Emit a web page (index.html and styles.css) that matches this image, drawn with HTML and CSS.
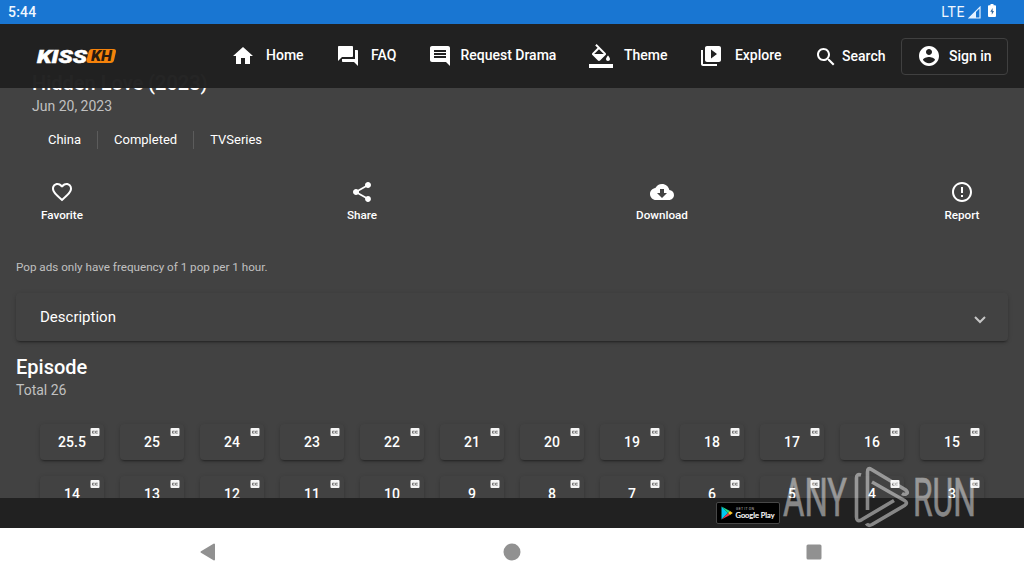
FILE: index.html
```html
<!DOCTYPE html>
<html lang="en">
<head>
    <meta charset="UTF-8">
    <meta name="viewport" content="width=device-width, initial-scale=1">
    <title>Hidden Love (2023) - KissKH</title>
    <link rel="stylesheet" href="styles.css">
</head>
<body>
    <div class="status-bar">
        <span class="clock">5:44</span>
        <span class="lte">LTE</span>
        <svg class="signal" width="13" height="13" viewBox="0 0 13 13"><path d="M12 1.2V12H1.2z" fill="none" stroke="#e3f0ff" stroke-width="1.2"/><path d="M8 5v7H1z" fill="#e3f0ff"/></svg>
        <svg class="battery" width="8" height="14" viewBox="0 0 8 14"><path d="M2.5 0h3v1.3H7q1 0 1 1V12q0 1-1 1H1q-1 0-1-1V2.300q0-1 1-1h1.500z" fill="#fff"/><path d="M4.600 4L2.300 7.700h1.500v3L6 7H4.600z" fill="#34689c"/></svg>
    </div>

    <header class="header">
        <svg class="logo" width="82" height="24" viewBox="0 0 82 24">
            <path d="M56 5h21.500q3 0 2.400 3l-1.800 8q-.6 3-3.600 3H53q-3 0-2.400-3l2-8q.800-3 3.400-3z" fill="#f5820b"/>
            <text class="logo-text" x="1" y="18.500" textLength="50" lengthAdjust="spacingAndGlyphs">KISS</text>
            <text class="logo-text logo-kh" x="55" y="17" textLength="21" lengthAdjust="spacingAndGlyphs">KH</text>
        </svg>
        <nav class="nav">
            <a class="nav-item home"><svg class="icon" viewBox="0 0 24 24"><path d="M10 20v-6h4v6h5v-8h3L12 3 2 12h3v8z"/></svg>Home</a>
            <a class="nav-item faq"><svg class="icon" viewBox="0 0 24 24"><path d="M21 6h-2v9H6v2c0 .55.45 1 1 1h11l4 4V7c0-.55-.45-1-1-1zm-4 6V3c0-.55-.45-1-1-1H3c-.55 0-1 .45-1 1v14l4-4h10c.55 0 1-.45 1-1z"/></svg>FAQ</a>
            <a class="nav-item request"><svg class="icon" viewBox="0 0 24 24"><path d="M21.990 4c0-1.100-.89-2-1.990-2H4c-1.100 0-2 .9-2 2v12c0 1.100.9 2 2 2h14l4 4-.01-18zM18 14H6v-2h12v2zm0-3H6V9h12v2zm0-3H6V6h12v2z"/></svg>Request Drama</a>
            <a class="nav-item theme"><svg class="icon" viewBox="0 0 24 24"><path d="M16.560 8.940L7.620 0 6.210 1.410l2.380 2.380-5.150 5.150c-.59.59-.59 1.540 0 2.120l5.500 5.500c.29.29.68.44 1.060.44s.77-.15 1.060-.44l5.500-5.500c.59-.58.59-1.530 0-2.120zM5.210 10L10 5.210 14.790 10H5.210zM19 11.500s-2 2.170-2 3.500c0 1.100.9 2 2 2s2-.9 2-2c0-1.330-2-3.500-2-3.500zM0 20h24v4H0z"/></svg>Theme</a>
            <a class="nav-item explore"><svg class="icon" viewBox="0 0 24 24"><path d="M4 6H2v14c0 1.100.9 2 2 2h14v-2H4V6zm16-4H8c-1.100 0-2 .9-2 2v12c0 1.100.9 2 2 2h12c1.100 0 2-.9 2-2V4c0-1.100-.9-2-2-2zm-8 12.500v-9l6 4.500-6 4.500z"/></svg>Explore</a>
            <a class="nav-item search"><svg class="icon" viewBox="0 0 24 24"><path d="M15.500 14h-.79l-.28-.27C15.410 12.590 16 11.110 16 9.500 16 5.910 13.090 3 9.500 3S3 5.910 3 9.500 5.910 16 9.500 16c1.610 0 3.090-.59 4.230-1.570l.27.28v.79l5 4.990L20.490 19l-4.990-5zm-6 0C7.010 14 5 11.990 5 9.500S7.010 5 9.500 5 14 7.010 14 9.500 11.990 14 9.500 14z"/></svg>Search</a>
        </nav>
        <button class="sign-in"><svg class="icon" viewBox="0 0 24 24"><path d="M12 2C6.480 2 2 6.480 2 12s4.480 10 10 10 10-4.480 10-10S17.520 2 12 2zm0 3c1.660 0 3 1.340 3 3s-1.340 3-3 3-3-1.340-3-3 1.340-3 3-3zm0 14.200c-2.500 0-4.710-1.280-6-3.220.03-1.990 4-3.080 6-3.080 1.990 0 5.970 1.090 6 3.080-1.290 1.940-3.500 3.220-6 3.220z"/></svg>Sign in</button>
    </header>

    <main class="content">
        <section class="drama">
            <h1>Hidden Love (2023)</h1>
            <p class="date">Jun 20, 2023</p>
            <ul class="meta">
                <li>China</li>
                <li>Completed</li>
                <li>TVSeries</li>
            </ul>
        </section>

        <div class="actions">
            <a class="action"><svg class="icon" viewBox="0 0 24 24"><path d="M16.500 3c-1.740 0-3.410.81-4.500 2.090C10.910 3.810 9.240 3 7.500 3 4.420 3 2 5.420 2 8.500c0 3.780 3.400 6.860 8.550 11.540L12 21.350l1.450-1.320C18.600 15.360 22 12.280 22 8.500 22 5.420 19.580 3 16.500 3zm-4.400 15.550l-.1.100-.1-.1C7.140 14.240 4 11.390 4 8.500 4 6.500 5.500 5 7.500 5c1.540 0 3.040.99 3.570 2.360h1.870C13.460 5.990 14.960 5 16.500 5c2 0 3.500 1.500 3.500 3.500 0 2.890-3.140 5.740-7.900 10.050z"/></svg>Favorite</a>
            <a class="action"><svg class="icon" viewBox="0 0 24 24"><path d="M18 16.080c-.76 0-1.440.3-1.960.77L8.910 12.700c.05-.23.09-.46.09-.7s-.04-.47-.09-.7l7.050-4.110c.54.5 1.250.81 2.040.81 1.660 0 3-1.340 3-3s-1.340-3-3-3-3 1.340-3 3c0 .24.04.47.09.7L8.040 9.810C7.500 9.310 6.790 9 6 9c-1.660 0-3 1.340-3 3s1.340 3 3 3c.79 0 1.500-.31 2.040-.81l7.120 4.160c-.05.21-.08.43-.08.65 0 1.610 1.310 2.920 2.920 2.920s2.920-1.310 2.920-2.920-1.310-2.920-2.920-2.920z"/></svg>Share</a>
            <a class="action"><svg class="icon" viewBox="0 0 24 24"><path d="M19.350 10.040C18.670 6.590 15.640 4 12 4 9.110 4 6.600 5.640 5.350 8.040 2.340 8.360 0 10.910 0 14c0 3.310 2.690 6 6 6h13c2.760 0 5-2.240 5-5 0-2.640-2.050-4.780-4.650-4.960zM17 13l-5 5-5-5h3V9h4v4h3z"/></svg>Download</a>
            <a class="action"><svg class="icon" viewBox="0 0 24 24"><path d="M11 15h2v2h-2zm0-8h2v6h-2zm.99-5C6.470 2 2 6.480 2 12s4.470 10 9.990 10C17.520 22 22 17.520 22 12S17.520 2 11.990 2zM12 20c-4.420 0-8-3.580-8-8s3.580-8 8-8 8 3.580 8 8-3.580 8-8 8z"/></svg>Report</a>
        </div>

        <p class="notice">Pop ads only have frequency of 1 pop per 1 hour.</p>

        <div class="panel">
            <span>Description</span>
            <svg class="arrow" viewBox="0 0 12 8"><path d="M1 1l5 5 5-5"/></svg>
        </div>

        <h2>Episode</h2>
        <p class="total">Total 26</p>

        <div class="episodes"></div>
    </main>

    <footer class="footer">
        <svg class="play-badge" width="64" height="22" viewBox="0 0 64 22">
            <rect x=".5" y=".5" width="63" height="21" rx="1.500" fill="#000" stroke="#555" stroke-width=".8"/>
            <path d="M5.500 4.500v13l6.500-6.500z" fill="#00c8f0"/>
            <path d="M5.500 4.500L12 11l2-2z" fill="#20dc88"/>
            <path d="M5.500 17.500L12 11l2 2z" fill="#f03a4a"/>
            <path d="M14 9l2.800 2L14 13l-2-2z" fill="#ffc825"/>
            <text class="badge-small" x="20" y="8" textLength="18">GET IT ON</text>
            <text class="badge-name" x="19.500" y="15.500" textLength="39" lengthAdjust="spacingAndGlyphs">Google Play</text>
        </svg>
    </footer>

    <div class="system-nav">
        <svg width="16" height="18" viewBox="0 0 16 18"><path d="M14 1.500v15L1.500 9z" stroke="#919191" stroke-width="2" stroke-linejoin="round"/></svg>
        <svg width="18" height="18" viewBox="0 0 18 18"><circle cx="9" cy="9" r="8.500"/></svg>
        <svg width="16" height="16" viewBox="0 0 16 16"><rect x=".5" y=".5" width="15" height="15" rx="1.500"/></svg>
    </div>

    <svg class="watermark" width="200" height="66" viewBox="0 0 200 66">
        <text x="1" y="51" textLength="64" lengthAdjust="spacingAndGlyphs">ANY</text>
        <path d="M79 10q-4.500-1.500-4.500 3V52q0 5.500 5 2.800L112 35.500"/>
        <path d="M85.500 45V7q0-5 4-2.500L123 24.500q4 3 1 4.500-2 .8-4-.5"/>
        <path d="M90 17l32.500 18.500q4 2.500 0 5L90 59.500q-4 2-5.500-1"/>
        <text x="131" y="51" textLength="63" lengthAdjust="spacingAndGlyphs">RUN</text>
    </svg>

    <script>
        const episodes = ["25.5"];
        for (let i = 25; i >= 3; i--) episodes.push(i);

        const list = document.querySelector('.episodes');

        episodes.forEach(episode => {
            const button = document.createElement('button');
            button.className = 'episode';
            button.innerHTML = `${episode}<svg class="cc" viewBox="0 0 10 8"><rect x=".5" width="9" height="8" rx="1" fill="#f5f5f5"/><path d="M4.600 3.200H2.500v1.900h2.100M7.700 3.200H5.600v1.900h2.100" fill="none" stroke="#555" stroke-width=".8"/></svg>`;
            list.appendChild(button);
        });
    </script>
</body>
</html>
```

FILE: styles.css
```css
* {
    margin: 0;
    padding: 0;
    box-sizing: border-box;
}

body {
    display: flex;
    flex-direction: column;
    height: 576px;
    overflow: hidden;
    background-color: #424242;
    color: white;
    font-family: Roboto, sans-serif;
    font-size: 14px;
}

.icon {
    width: 24px;
    height: 24px;
    fill: white;
    flex-shrink: 0;
}

.status-bar {
    display: flex;
    align-items: center;
    flex: 0 0 24px;
    padding: 0 28px 0 8px;
    background-color: #1976d2;
    color: #f0f7ff;
}

.clock {
    flex: 1;
    font-weight: 500;
    letter-spacing: 0.2px;
}

.lte {
    letter-spacing: 0.6px;
}

.signal {
    margin: 0 7px 0 3px;
}

.battery {
    margin-top: -3px;
}

.header {
    position: relative;
    z-index: 1;
    display: flex;
    align-items: center;
    flex: 0 0 64px;
    padding: 0 16px 0 36px;
    background-color: rgba(33, 33, 33, 0.98);
}

.logo-text {
    font: italic 900 18.5px Roboto, sans-serif;
    fill: white;
    stroke: white;
    stroke-width: 0.5px;
}

.logo-kh {
    font-size: 14px;
    fill: #2a1b10;
    stroke: none;
}

.nav {
    display: flex;
    flex: 1;
    margin-left: 112.5px;
    font-weight: 500;
}

.nav-item {
    display: flex;
    align-items: center;
    gap: 11.5px;
    line-height: 22px;
    padding-bottom: 2px;
    white-space: nowrap;
}

.nav-item .icon {
    position: relative;
    top: 1px;
}

.faq {
    margin-left: 32px;
}

.request {
    margin-left: 32px;
    gap: 8px;
}

.theme {
    margin-left: 32.5px;
    gap: 11px;
}

.explore {
    margin-left: 32px;
}

.search {
    margin-left: 32.5px;
    gap: 4px;
    padding-bottom: 0;
}

.search .icon {
    top: 1px;
}

.sign-in {
    display: flex;
    align-items: center;
    gap: 8px;
    width: 107px;
    height: 37px;
    padding: 0 15px;
    border: 1px solid #404040;
    border-radius: 4px;
    background: transparent;
    color: white;
    font: 500 14px Roboto, sans-serif;
}

.content {
    flex: 1;
    min-height: 0;
    margin-top: -19px;
    padding: 0 16px;
}

.drama {
    padding: 0 16px;
}

h1, h2 {
    font-size: 20px;
    font-weight: 500;
    line-height: 28px;
}

.date, .total {
    color: #c0c0c0;
    line-height: 18px;
}

.meta {
    display: flex;
    margin-top: 16px;
    list-style: none;
    font-size: 13px;
    line-height: 18px;
}

.meta li {
    padding: 0 16px;
}

.meta li + li {
    border-left: 1px solid #5c5c5c;
}

.actions {
    display: flex;
    justify-content: space-between;
    margin-top: 31px;
}

.action {
    display: flex;
    flex-direction: column;
    align-items: center;
    width: 92px;
    font-size: 11.67px;
    font-weight: 500;
    line-height: 23px;
}

.notice {
    margin-top: 32px;
    color: #c0c0c0;
    font-size: 11.67px;
    line-height: 17px;
}

.panel {
    display: flex;
    align-items: center;
    justify-content: space-between;
    height: 48px;
    margin-top: 17px;
    padding: 0 22px 0 24px;
    border-radius: 4px;
    font-size: 15px;
    box-shadow: 0 3px 1px -2px rgba(0, 0, 0, 0.2), 0 2px 2px 0 rgba(0, 0, 0, 0.14), 0 1px 5px 0 rgba(0, 0, 0, 0.12);
}

.arrow {
    width: 12px;
    height: 8px;
    margin-top: 6px;
    fill: none;
    stroke: #c6c6c6;
    stroke-width: 2;
}

h2 {
    margin-top: 12px;
}

.episodes {
    display: grid;
    grid-template-columns: repeat(12, 64px);
    gap: 16px;
    margin-top: 25px;
    padding-left: 24px;
}

.episode {
    position: relative;
    height: 36px;
    border: none;
    border-radius: 4px;
    background-color: #424242;
    color: white;
    font: 500 14px Roboto, sans-serif;
    box-shadow: 0 3px 1px -2px rgba(0, 0, 0, 0.2), 0 2px 2px 0 rgba(0, 0, 0, 0.14), 0 1px 5px 0 rgba(0, 0, 0, 0.12);
}

.cc {
    position: absolute;
    top: 4px;
    right: 4px;
    width: 10px;
    height: 8px;
}

.footer {
    position: relative;
    flex: 0 0 30px;
    padding: 4px 0 0 716px;
    background-color: #212121;
}

.badge-small {
    font: 3.5px Roboto, sans-serif;
    fill: #bbb;
}

.badge-name {
    font: 500 8px Lato, sans-serif;
    fill: white;
    stroke: white;
    stroke-width: 0.2px;
}

.system-nav {
    display: flex;
    align-items: center;
    justify-content: space-between;
    flex: 0 0 48px;
    padding: 0 202px 0 200px;
    background-color: white;
    fill: #919191;
}

.system-nav circle {
    transform: translateX(1px);
}

.system-nav svg {
    overflow: visible;
}

.watermark {
    position: absolute;
    left: 782px;
    top: 465px;
    opacity: 0.46;
}

.watermark path {
    fill: none;
    stroke: white;
    stroke-width: 3.6;
    stroke-linejoin: round;
}

.watermark text {
    font: 53px Roboto, sans-serif;
    fill: white;
    stroke: white;
    stroke-width: 0.6px;
}
```
